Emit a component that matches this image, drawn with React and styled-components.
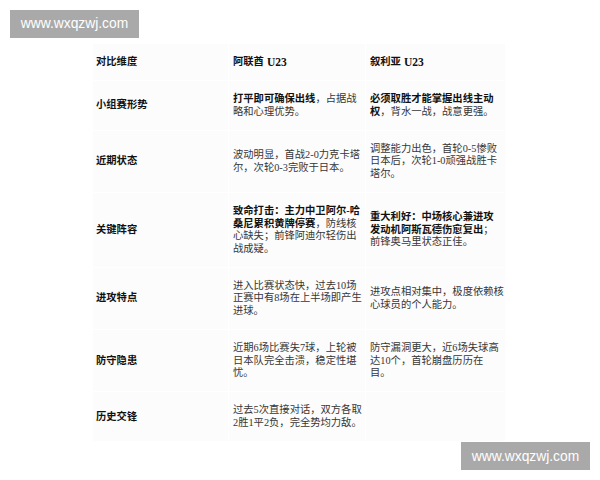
import React from 'react';
import styled, { createGlobalStyle } from 'styled-components';

// page reset and fonts
const GlobalStyle = createGlobalStyle`
	body {
		margin: 0;
		background: #ffffff;
		font-family: "Liberation Serif", "Noto Sans CJK SC", serif;
	}
`;

const Page = styled.div`
	width: 600px;
	height: 480px;
	padding: 10px;
	box-sizing: border-box;
	display: flex;
	flex-direction: column;
`;

const Watermark = styled.div`
	align-self: ${(props) => (props.right ? 'flex-end' : 'flex-start')};
	width: 129px;
	height: 30px;
	margin-top: ${(props) => (props.right ? '1px' : '0')};
	background: #a9a9a9;
	color: #ffffff;
	font-family: "Liberation Sans", Arial, sans-serif;
	font-size: 13.8px;
	display: flex;
	align-items: center;
	justify-content: center;
`;

const Table = styled.div`
	margin: 6px 0 0 83px;
	display: grid;
	grid-template-columns: 135px 136px 139px;
	gap: 1px;
	background: #ffffff;
`;

const Cell = styled.div`
	background: #fcfcfc;
	padding: 12px 0 12px ${(props) => (props.first ? '3px' : '4px')};
	display: flex;
	align-items: center;
	font-size: 10.3px;
	line-height: 12.4px;
	white-space: nowrap;
	color: ${(props) => (props.bold ? '#111111' : '#363636')};
	font-weight: ${(props) => (props.bold ? 'bold' : 'normal')};
	b {
		color: #111111;
		font-weight: bold;
	}
`;

// latin team tag in the header is set a bit larger than the CJK text
const Tag = styled.span`
	font-size: 11.5px;
	margin-left: 3px;
`;

const rows = [
	{
		label: '小组赛形势',
		a: (
			<span>
				<b>打平即可确保出线</b>，占据战
				<br />
				略和心理优势。
			</span>
		),
		b: (
			<span>
				<b>必须取胜才能掌握出线主动</b>
				<br />
				<b>权</b>，背水一战，战意更强。
			</span>
		),
	},
	{
		label: '近期状态',
		a: (
			<span>
				波动明显，首战2-0力克卡塔
				<br />
				尔，次轮0-3完败于日本。
			</span>
		),
		b: (
			<span>
				调整能力出色，首轮0-5惨败
				<br />
				日本后，次轮1-0顽强战胜卡
				<br />
				塔尔。
			</span>
		),
	},
	{
		label: '关键阵容',
		a: (
			<span>
				<b>致命打击：主力中卫阿尔-哈</b>
				<br />
				<b>桑尼累积黄牌停赛</b>，防线核
				<br />
				心缺失；前锋阿迪尔轻伤出
				<br />
				战成疑。
			</span>
		),
		b: (
			<span>
				<b>重大利好：中场核心兼进攻</b>
				<br />
				<b>发动机阿斯瓦德伤愈复出</b>；
				<br />
				前锋奥马里状态正佳。
			</span>
		),
	},
	{
		label: '进攻特点',
		a: (
			<span>
				进入比赛状态快，过去10场
				<br />
				正赛中有8场在上半场即产生
				<br />
				进球。
			</span>
		),
		b: (
			<span>
				进攻点相对集中，极度依赖核
				<br />
				心球员的个人能力。
			</span>
		),
	},
	{
		label: '防守隐患',
		a: (
			<span>
				近期6场比赛失7球，上轮被
				<br />
				日本队完全击溃，稳定性堪
				<br />
				忧。
			</span>
		),
		b: (
			<span>
				防守漏洞更大，近6场失球高
				<br />
				达10个，首轮崩盘历历在
				<br />
				目。
			</span>
		),
	},
	{
		label: '历史交锋',
		a: (
			<span>
				过去5次直接对话，双方各取
				<br />
				2胜1平2负，完全势均力敌。
			</span>
		),
		b: null,
	},
];

export default function App() {
	return (
		<Page>
			<GlobalStyle />
			<Watermark>www.wxqzwj.com</Watermark>
			<Table>
				<Cell first bold>对比维度</Cell>
				<Cell bold>
					阿联酋<Tag>U23</Tag>
				</Cell>
				<Cell bold>
					叙利亚<Tag>U23</Tag>
				</Cell>
				{rows.map((row) => (
					<React.Fragment key={row.label}>
						<Cell first bold>{row.label}</Cell>
						<Cell>{row.a}</Cell>
						<Cell>{row.b}</Cell>
					</React.Fragment>
				))}
			</Table>
			<Watermark right>www.wxqzwj.com</Watermark>
		</Page>
	);
}
